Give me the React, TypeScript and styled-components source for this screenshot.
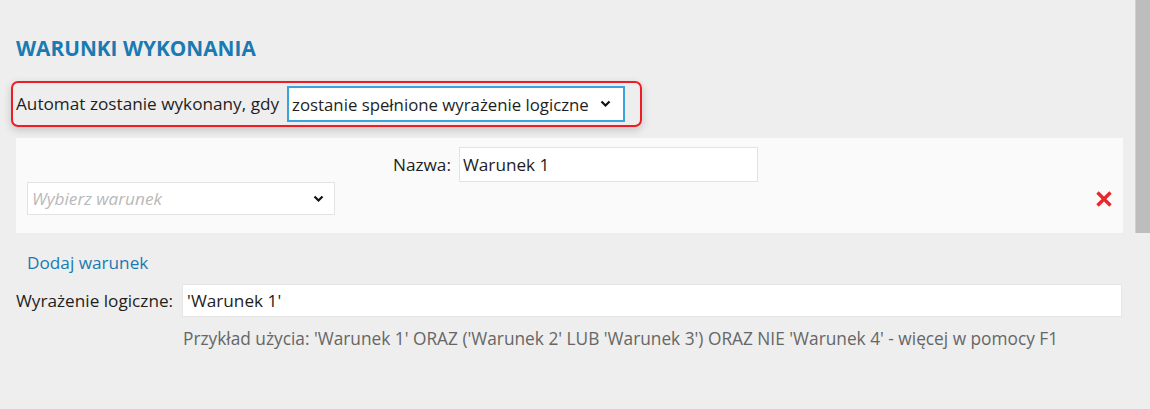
import React from 'react';
import styled, { createGlobalStyle } from 'styled-components';

const GlobalStyle = createGlobalStyle`
  html, body {
    margin: 0;
    padding: 0;
    background: #eeeeee;
  }
  body {
    font-family: 'Open Sans', 'Noto Sans', sans-serif;
    color: #1e1e1e;
  }
`;

const Chevron = () => (
  <svg width="11" height="8" viewBox="0 0 11 8">
    <path d="M1.5 1.5 L5.5 5.5 L9.5 1.5" fill="none" stroke="#111" strokeWidth="2.2" />
  </svg>
);

const App = () => {
  return (
    <Page>
      <GlobalStyle />
      <Content>
        <Heading>WARUNKI WYKONANIA</Heading>
        <Highlight>
          <Label>Automat zostanie wykonany, gdy</Label>
          <ModeSelect>
            <span>zostanie spełnione wyrażenie logiczne</span>
            <Chevron />
          </ModeSelect>
        </Highlight>
        <ConditionPanel>
          <NameRow>
            <Label>Nazwa:</Label>
            <NameInput>Warunek 1</NameInput>
          </NameRow>
          <PickRow>
            <ConditionSelect>
              <Placeholder>Wybierz warunek</Placeholder>
              <Chevron />
            </ConditionSelect>
            <RemoveBtn>
              <svg width="18" height="18" viewBox="0 0 18 18">
                <path d="M2.5 2.5 L15.5 15.5 M15.5 2.5 L2.5 15.5" stroke="#e8262b" strokeWidth="3.4" />
              </svg>
            </RemoveBtn>
          </PickRow>
        </ConditionPanel>
        <AddLink>Dodaj warunek</AddLink>
        <ExprRow>
          <Label>Wyrażenie logiczne:</Label>
          <ExprInput>'Warunek 1'</ExprInput>
        </ExprRow>
        <Hint>
          Przykład użycia: 'Warunek 1' ORAZ ('Warunek 2' LUB 'Warunek 3') ORAZ NIE 'Warunek 4' - więcej w pomocy F1
        </Hint>
      </Content>
      <Scrollbar />
    </Page>
  );
};

const Page = styled.div`
  width: 1150px;
  height: 409px;
  display: flex;
  overflow: hidden;
`;

const Content = styled.div`
  flex: 1;
  padding: 35px 12px 0 16px;
  display: flex;
  flex-direction: column;
`;

const Heading = styled.h2`
  margin: 0 0 19px;
  font-size: 20.8px;
  font-weight: 700;
  line-height: 27px;
  color: #1a7ab2;
`;

const Label = styled.span`
  font-size: 17.2px;
  line-height: 22px;
  color: #1e1e1e;
  white-space: nowrap;
`;

const Highlight = styled.div`
  align-self: flex-start;
  margin-left: -5px;
  width: 631px;
  height: 46px;
  box-sizing: border-box;
  border: 2px solid #ee1c25;
  border-radius: 7px;
  box-shadow: 0 3px 8px rgba(0, 0, 0, 0.18);
  display: flex;
  align-items: center;
  padding: 0 0 0 3px;
  gap: 8px;
`;

const ModeSelect = styled.div`
  width: 338px;
  height: 36px;
  flex-shrink: 0;
  box-sizing: border-box;
  border: 2px solid #3aa3dc;
  background: #fff;
  display: flex;
  align-items: center;
  justify-content: space-between;
  padding: 0 12px 0 3px;
  font-size: 16.8px;
  white-space: nowrap;
  color: #1e1e1e;
`;

const ConditionPanel = styled.div`
  margin-top: 11px;
  height: 95px;
  background: #fafafa;
  box-sizing: border-box;
  padding: 9px 0 0 11px;
  display: flex;
  flex-direction: column;
`;

const NameRow = styled.div`
  display: flex;
  align-items: center;
  gap: 8px;
  padding-left: 366px;
`;

const NameInput = styled.div`
  width: 299px;
  height: 35px;
  box-sizing: border-box;
  border: 1px solid #e3e3e3;
  background: #fff;
  display: flex;
  align-items: center;
  padding-left: 3px;
  font-size: 17.2px;
`;

const PickRow = styled.div`
  display: flex;
  align-items: center;
  justify-content: space-between;
  padding-right: 10px;
`;

const ConditionSelect = styled.div`
  width: 308px;
  height: 33px;
  box-sizing: border-box;
  border: 1px solid #e3e3e3;
  background: #fff;
  display: flex;
  align-items: center;
  justify-content: space-between;
  padding: 0 10px 0 4px;
`;

const Placeholder = styled.span`
  font-size: 17.2px;
  font-style: italic;
  color: #b9b9b9;
`;

const RemoveBtn = styled.div`
  width: 18px;
  height: 18px;
  display: flex;
`;

const AddLink = styled.a`
  margin: 18px 0 0 11px;
  font-size: 17.2px;
  line-height: 24px;
  color: #1a7ab2;
  cursor: pointer;
`;

const ExprRow = styled.div`
  margin-top: 9px;
  display: flex;
  align-items: center;
  gap: 9px;
`;

const ExprInput = styled.div`
  flex: 1;
  margin-right: 1px;
  height: 33px;
  box-sizing: border-box;
  border: 1px solid #e6e6e6;
  background: #fff;
  display: flex;
  align-items: center;
  padding-left: 4px;
  font-size: 17.2px;
`;

const Hint = styled.div`
  margin: 10px 0 0 167px;
  font-size: 17.3px;
  line-height: 24px;
  color: #666;
`;

const Scrollbar = styled.div`
  width: 15px;
  height: 233px;
  box-sizing: border-box;
  border-left: 1px solid #d0d0d0;
  background: #bdbdbd;
`;

export default App;
